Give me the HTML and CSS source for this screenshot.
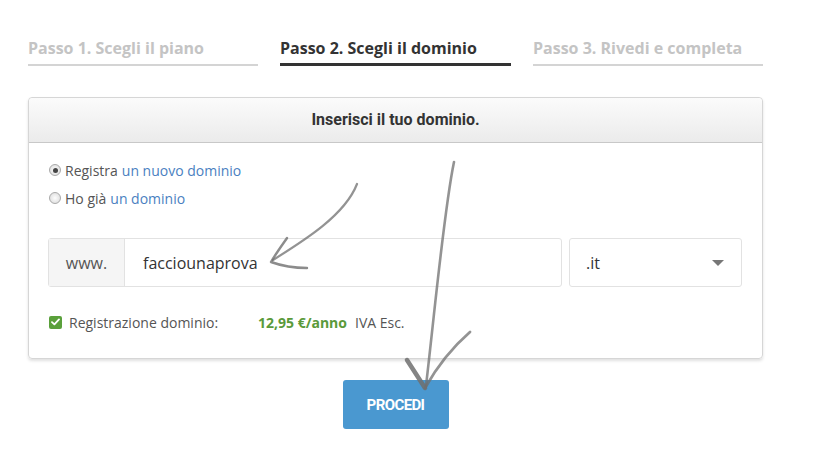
FILE: index.html
```html
<!DOCTYPE html>
<html lang="it">
<head>
    <meta charset="UTF-8">
    <title>Scegli il dominio</title>
    <link rel="stylesheet" href="styles.css">
</head>
<body>

    <div class="page">
        <div class="steps">
            <div class="step">Passo 1. Scegli il piano</div>
            <div class="step current">Passo 2. Scegli il dominio</div>
            <div class="step">Passo 3. Rivedi e completa</div>
        </div>

        <div class="panel">
            <div class="panel-head">Inserisci il tuo dominio.</div>
            <div class="panel-body">
                <label class="choice"><span class="radio checked"></span> Registra <a href="#">un nuovo dominio</a></label>
                <label class="choice"><span class="radio"></span> Ho già <a href="#">un dominio</a></label>

                <div class="domain-row">
                    <div class="input-group">
                        <span class="addon">www.</span>
                        <span class="field">facciounaprova</span>
                    </div>
                    <div class="select">
                        <span>.it</span>
                        <span class="caret"></span>
                    </div>
                </div>

                <div class="price-row">
                    <span class="check">
                        <svg width="9" height="8" viewBox="0 0 9 8"><path d="M1 4.2 L3.4 6.4 L8 1.4" fill="none" stroke="#fff" stroke-width="1.8" stroke-linecap="round" stroke-linejoin="round"/></svg>
                    </span>
                    <span class="price-label">Registrazione dominio:</span>
                    <span class="price">12,95 €/anno</span>
                    <span class="tax">IVA Esc.</span>
                </div>
            </div>
        </div>

        <div class="actions">
            <button class="btn">PROCEDI</button>
        </div>

        <!-- frecce disegnate a mano sopra la pagina -->
        <svg class="scribbles" width="818" height="460" viewBox="0 0 818 460">
            <g fill="none" stroke="#6f6f6f" stroke-linecap="round" stroke-linejoin="round">
                <path d="M357 184 C 345 215, 305 240, 273 260" stroke-width="2.2" opacity="0.75"/>
                <path d="M287 238 C 280 248, 275 255, 271 262 C 282 266, 295 268, 307 268" stroke-width="2.4" opacity="0.8"/>
                <path d="M454 162 C 444 210, 436 300, 426 386" stroke-width="2.6" opacity="0.75"/>
                <path d="M407 360 L 425 388" stroke-width="4.5" opacity="0.85"/>
                <path d="M470 332 C 455 345, 438 365, 425 388" stroke-width="2.8" opacity="0.75"/>
            </g>
        </svg>
    </div>

</body>
</html>
```

FILE: styles.css
```css
body {
    margin: 0;
    padding: 0;
    background-color: #fff;
    color: #555;
    font-family: 'Open Sans', 'Liberation Sans', sans-serif;
    font-size: 14px;
}
.page {
    position: relative;
    width: 818px;
    height: 460px;
    padding: 37px 0 0 28px;
    box-sizing: border-box;
}
.steps {
    display: grid;
    grid-template-columns: 230px 231px 230px;
    gap: 22px;
    width: 735px;
}
.step {
    font-size: 16px;
    font-weight: 700;
    line-height: 22px;
    color: #c4c4c4;
    padding-bottom: 5px;
    border-bottom: 2px solid #d4d4d4;
}
.step.current {
    color: #333;
    padding-bottom: 4px;
    border-bottom: 3px solid #333;
}
.panel {
    width: 735px;
    box-sizing: border-box;
    margin-top: 31px;
    border: 1px solid #d6d6d6;
    border-radius: 4px;
    box-shadow: 0 2px 3px rgba(0, 0, 0, 0.12);
}
.panel-head {
    height: 44px;
    line-height: 44px;
    text-align: center;
    font-family: Roboto, 'Liberation Sans', sans-serif;
    font-weight: 700;
    font-size: 16px;
    color: #333;
    background: linear-gradient(#fbfbfb, #ebebeb);
    border-bottom: 1px solid #c8c8c8;
    border-radius: 4px 4px 0 0;
}
.panel-body {
    padding: 13px 20px 26px 19px;
}
.choice {
    display: flex;
    align-items: center;
    gap: 4px;
    height: 28px;
    padding-left: 1px;
    color: #555;
}
.choice a {
    color: #4a7fc1;
    text-decoration: none;
}
.radio {
    width: 12px;
    height: 12px;
    box-sizing: border-box;
    border: 1px solid #a9a9a9;
    border-radius: 50%;
    background: radial-gradient(#fdfdfd, #d8d8d8);
    display: inline-flex;
    align-items: center;
    justify-content: center;
}
.radio.checked::after {
    content: "";
    width: 5px;
    height: 5px;
    border-radius: 50%;
    background-color: #444;
}
.domain-row {
    display: flex;
    gap: 7px;
    margin-top: 26px;
    height: 49px;
}
.input-group {
    display: flex;
    width: 514px;
    box-sizing: border-box;
    border: 1px solid #e2e2e2;
    border-radius: 3px;
    font-size: 16px;
}
.addon {
    width: 75px;
    background-color: #f5f5f5;
    border-right: 1px solid #e2e2e2;
    color: #555;
    display: flex;
    align-items: center;
    justify-content: center;
}
.field {
    flex: 1;
    display: flex;
    align-items: center;
    padding-left: 18px;
    color: #333;
}
.select {
    flex: 1;
    display: flex;
    align-items: center;
    justify-content: space-between;
    padding: 0 17px 0 16px;
    border: 1px solid #e2e2e2;
    border-radius: 3px;
    font-size: 16px;
    color: #333;
}
.caret {
    width: 0;
    height: 0;
    border-left: 6px solid transparent;
    border-right: 6px solid transparent;
    border-top: 6px solid #777;
}
.price-row {
    display: flex;
    align-items: center;
    margin-top: 25px;
    height: 20px;
    padding-left: 1px;
}
.check {
    width: 13px;
    height: 13px;
    border-radius: 2px;
    background-color: #5aa03b;
    display: inline-flex;
    align-items: center;
    justify-content: center;
    margin-right: 7px;
}
.price-label {
    width: 189px;
}
.price {
    color: #5a9a3a;
    font-weight: 700;
    margin-right: 8px;
}
.actions {
    width: 735px;
    display: flex;
    justify-content: center;
    margin-top: 21px;
}
.btn {
    width: 106px;
    height: 49px;
    border: none;
    border-radius: 3px;
    background-color: #4a98d0;
    color: #fff;
    font-family: Roboto, 'Liberation Sans', sans-serif;
    font-weight: 700;
    font-size: 15px;
    letter-spacing: -0.6px;
    cursor: pointer;
}
.scribbles {
    position: absolute;
    left: 0;
    top: 0;
    pointer-events: none;
}
```
